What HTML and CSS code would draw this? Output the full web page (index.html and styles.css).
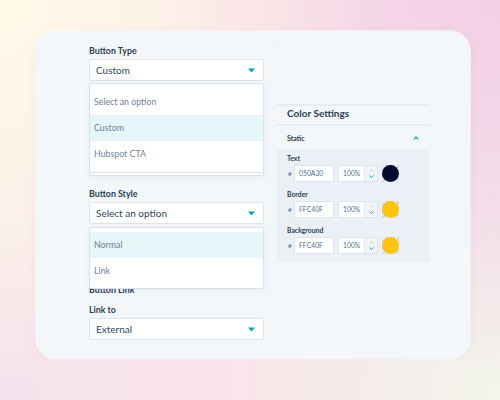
FILE: index.html
```html
<!DOCTYPE html>
<html lang="en">
<head>
<meta charset="utf-8">
<title>Button settings</title>
<link rel="stylesheet" href="styles.css">
</head>
<body>
<div class="card">
  <div class="left">
    <div class="field">
      <div class="label">Button Type</div>
      <div class="select-wrap">
        <div class="select"><span>Custom</span><svg class="caret" width="7" height="5" viewBox="0 0 7 5"><path d="M0 0.5h7L3.5 4.5z"/></svg></div>
        <div class="menu menu-type">
          <div class="menu-list">
            <div class="opt">Select an option</div>
            <div class="opt active">Custom</div>
            <div class="opt">Hubspot CTA</div>
          </div>
        </div>
      </div>
    </div>
    <div class="field field-style">
      <div class="label">Button Style</div>
      <div class="select-wrap">
        <div class="select"><span>Select an option</span><svg class="caret" width="7" height="5" viewBox="0 0 7 5"><path d="M0 0.5h7L3.5 4.5z"/></svg></div>
        <div class="menu menu-style">
          <div class="opt active">Normal</div>
          <div class="opt">Link</div>
        </div>
      </div>
    </div>
    <div class="label section-label">Button Link</div>
    <div class="field field-link">
      <div class="label">Link to</div>
      <div class="select"><span>External</span><svg class="caret" width="7" height="5" viewBox="0 0 7 5"><path d="M0 0.5h7L3.5 4.5z"/></svg></div>
    </div>
  </div>
  <div class="right">
    <div class="panel">
      <div class="panel-head">Color Settings</div>
      <div class="panel-sub"><span>Static</span><svg class="chev-up" width="6" height="4" viewBox="0 0 6 4"><path d="M0.7 3.3L3 1l2.3 2.3"/></svg></div>
      <div class="panel-body">
        <div class="color-field">
          <div class="clabel">Text</div>
          <div class="crow">
            <span class="hash">#</span>
            <div class="hex">050A30</div>
            <div class="pct"><span class="pct-val">100%</span><div class="spin"><svg class="sp-up" width="5" height="3" viewBox="0 0 5 3"><path d="M0.5 2.5L2.5 0.6l2 1.9"/></svg><svg class="sp-down" width="5" height="3" viewBox="0 0 5 3"><path d="M0.5 0.5L2.5 2.4l2-1.9"/></svg></div></div>
            <div class="swatch"><span class="dot dot-navy"></span></div>
          </div>
        </div>
        <div class="color-field">
          <div class="clabel">Border</div>
          <div class="crow">
            <span class="hash">#</span>
            <div class="hex">FFC40F</div>
            <div class="pct"><span class="pct-val">100%</span><div class="spin"><svg class="sp-up" width="5" height="3" viewBox="0 0 5 3"><path d="M0.5 2.5L2.5 0.6l2 1.9"/></svg><svg class="sp-down" width="5" height="3" viewBox="0 0 5 3"><path d="M0.5 0.5L2.5 2.4l2-1.9"/></svg></div></div>
            <div class="swatch"><span class="dot dot-yellow"></span></div>
          </div>
        </div>
        <div class="color-field">
          <div class="clabel">Background</div>
          <div class="crow">
            <span class="hash">#</span>
            <div class="hex">FFC40F</div>
            <div class="pct"><span class="pct-val">100%</span><div class="spin"><svg class="sp-up" width="5" height="3" viewBox="0 0 5 3"><path d="M0.5 2.5L2.5 0.6l2 1.9"/></svg><svg class="sp-down" width="5" height="3" viewBox="0 0 5 3"><path d="M0.5 0.5L2.5 2.4l2-1.9"/></svg></div></div>
            <div class="swatch"><span class="dot dot-yellow"></span></div>
          </div>
        </div>
      </div>
    </div>
  </div>
</div>
</body>
</html>
```

FILE: styles.css
```css
* { box-sizing: border-box; }
html {
  height: 100%;
  background-color: #efe7ee;
  background-image:
    radial-gradient(circle at 0 0, #fff9e8 0, rgba(255,249,232,0) 60%),
    radial-gradient(circle at 100% 0, #f4cfe4 0, rgba(244,207,228,0) 58%),
    radial-gradient(circle at 0 100%, #f5e1ec 0, rgba(245,225,236,0) 50%),
    radial-gradient(circle at 100% 100%, #f3f4ea 0, rgba(243,244,234,0) 50%),
    linear-gradient(to right, #fbefe8, #fbe2e8 50%, #f1e4ee);
}
body {
  margin: 0;
  padding: 31px 0 0 36px;
  font-family: Lato, "Liberation Sans", sans-serif;
  color: #33475b;
}
.card {
  width: 434px;
  height: 328px;
  background: #f4f7fa;
  border-radius: 20px;
  box-shadow: 0 2px 10px rgba(120, 100, 120, 0.08), 0 0 0 1px rgba(255,255,255,0.6);
  padding: 12px 0 12px 40px;
  display: flex;
}
.left {
  width: 199px;
  height: 100%;
  border-left: 1px solid #eff2f6;
  border-right: 1px solid #eff2f6;
  padding: 2px 0 0 12px;
}
.label {
  font-weight: 700;
  font-size: 8.8px;
  line-height: 12px;
  height: 12px;
  color: #2d3e50;
  margin-bottom: 2px;
}
.select-wrap { position: relative; width: 175px; }
.select {
  width: 175px;
  height: 22px;
  background: #fff;
  border: 1px solid #dfe4ea;
  border-radius: 2px;
  display: flex;
  align-items: center;
  justify-content: space-between;
  padding: 0 8px 0 6px;
  font-size: 10px;
  color: #33475b;
}
.caret { fill: #00a4bd; }
.field-style { margin-top: 107px; }
.section-label { margin-top: 60px; margin-bottom: 0; }
.field-link { margin-top: 8px; }
.menu {
  position: absolute;
  left: 0;
  width: 175px;
  background: #fff;
  border: 1px solid #dbe1e8;
  border-radius: 2px;
  box-shadow: 0 2px 6px rgba(45, 62, 80, 0.06);
  z-index: 2;
}
.menu-type { top: 24px; padding-bottom: 2px; }
.menu-list { padding: 5px 0; border-bottom: 1px solid #dbe1e8; }
.menu-style { top: 25px; padding: 4px 0; }
.opt {
  height: 26px;
  line-height: 26px;
  padding-left: 4px;
  font-size: 8.8px;
  color: #6f8297;
}
.opt.active { background: #e5f5f8; }
.right {
  width: 153px;
  margin-left: 2px;
  padding-top: 61px;
}
.panel-head {
  border-top: 2px solid #e8ecf1;
  border-bottom: 2px solid #e8ecf1;
  height: 22px;
  line-height: 15px;
  padding: 0 0 0 10px;
  font-weight: 700;
  font-size: 10px;
  color: #2d3e50;
}
.panel-sub {
  height: 23px;
  display: flex;
  align-items: center;
  justify-content: space-between;
  padding: 0 11px 0 10px;
  font-weight: 700;
  font-size: 7px;
  color: #2d3e50;
}
.chev-up { fill: none; stroke: #00a4bd; stroke-width: 1.2; }
.panel-body {
  background: #eaf0f6;
  padding: 5px 10px 8px;
  display: flex;
  flex-direction: column;
  gap: 8px;
}
.clabel {
  font-weight: 700;
  font-size: 6.8px;
  line-height: 9px;
  height: 9px;
  color: #2d3e50;
  margin-bottom: 2px;
}
.crow { display: flex; align-items: center; height: 17px; }
.hash {
  width: 7px;
  padding-left: 1px;
  font-size: 6.5px;
  color: #516f90;
}
.hex {
  width: 40px;
  height: 17px;
  background: #fff;
  border: 1px solid #dfe4ea;
  padding-left: 4px;
  font-size: 6.8px;
  line-height: 15px;
  color: #516f90;
}
.pct {
  width: 40px;
  height: 17px;
  margin-left: 4px;
  display: flex;
  background: #fff;
  border: 1px solid #dfe4ea;
}
.pct-val {
  flex: 1;
  padding-left: 4px;
  font-size: 6.8px;
  line-height: 15px;
  color: #516f90;
}
.spin {
  width: 13px;
  background: #f2f5f8;
  border-left: 1px solid #e3e8ee;
  display: flex;
  flex-direction: column;
  align-items: center;
  justify-content: space-around;
  padding: 1px 0;
}
.sp-up { fill: none; stroke: #c5d0db; stroke-width: 0.9; }
.sp-down { fill: none; stroke: #00a4bd; stroke-width: 0.9; }
.swatch {
  width: 17px;
  height: 17px;
  margin-left: 4px;
  background-color: #e8ecf1;
  background-image: conic-gradient(#d3dae2 25%, transparent 0 50%, #d3dae2 0 75%, transparent 0);
  background-size: 6px 6px;
  display: flex;
}
.dot { width: 17px; height: 17px; border-radius: 50%; }
.dot-navy { background: #050a30; }
.dot-yellow { background: #ffc40f; }
```
